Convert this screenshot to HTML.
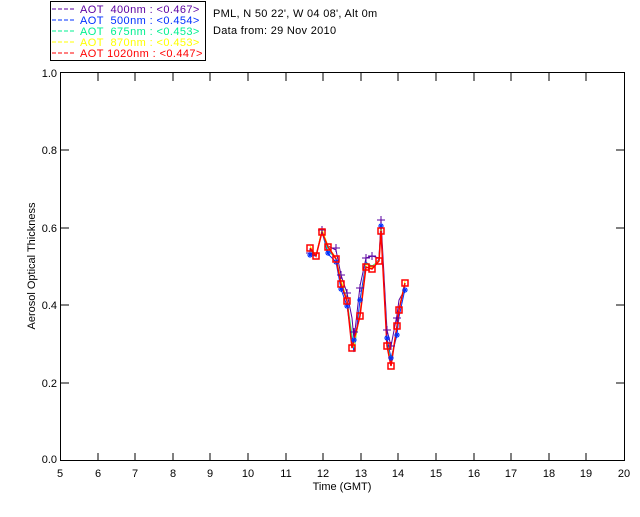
<!DOCTYPE html>
<html><head><style>
body{margin:0;background:#fff;}
svg text{font-family:"Liberation Sans",sans-serif;font-size:11px;}
</style></head><body>
<svg width="640" height="512" xmlns="http://www.w3.org/2000/svg">
<defs>
<path id="pl" d="M-4,0H4M0,-4V4" stroke="#5a00a0" fill="none"/>
<path id="st" d="M-3,0H3M0,-3V3M-2,-2L2,2M-2,2L2,-2" stroke="#0030ff" fill="none"/>
</defs>
<rect x="50.5" y="1.5" width="155" height="59" fill="none" stroke="#000"/>
<g font-size="11" letter-spacing="0.4">
<line x1="52" y1="9" x2="74" y2="9" stroke="#5a00a0" stroke-dasharray="4,2"/><text x="80" y="13" fill="#5a00a0">AOT &#160;400nm : &lt;0.467&gt;</text>
<line x1="52" y1="20" x2="74" y2="20" stroke="#0030ff" stroke-dasharray="4,2"/><text x="80" y="24" fill="#0030ff">AOT &#160;500nm : &lt;0.454&gt;</text>
<line x1="52" y1="31" x2="74" y2="31" stroke="#00f090" stroke-dasharray="4,2"/><text x="80" y="35" fill="#00f090">AOT &#160;675nm : &lt;0.453&gt;</text>
<line x1="52" y1="42" x2="74" y2="42" stroke="#ffff00" stroke-dasharray="4,2"/><text x="80" y="46" fill="#ffff00">AOT &#160;870nm : &lt;0.453&gt;</text>
<line x1="52" y1="53" x2="74" y2="53" stroke="#ff0000" stroke-dasharray="4,2"/><text x="80" y="57" fill="#ff0000">AOT 1020nm : &lt;0.447&gt;</text>
</g>
<text x="213" y="17" letter-spacing="0.3">PML, N 50 22', W 04 08', Alt 0m</text>
<text x="213" y="34" letter-spacing="0.3">Data from: 29 Nov 2010</text>
<rect x="60.5" y="72.5" width="564" height="388" fill="none" stroke="#000"/>
<g stroke="#000">
<line x1="98" y1="461" x2="98" y2="453"/><line x1="135" y1="461" x2="135" y2="453"/><line x1="173" y1="461" x2="173" y2="453"/><line x1="210" y1="461" x2="210" y2="453"/><line x1="248" y1="461" x2="248" y2="453"/><line x1="286" y1="461" x2="286" y2="453"/><line x1="323" y1="461" x2="323" y2="453"/><line x1="361" y1="461" x2="361" y2="453"/><line x1="398" y1="461" x2="398" y2="453"/><line x1="436" y1="461" x2="436" y2="453"/><line x1="474" y1="461" x2="474" y2="453"/><line x1="511" y1="461" x2="511" y2="453"/><line x1="549" y1="461" x2="549" y2="453"/><line x1="586" y1="461" x2="586" y2="453"/>
<line x1="98" y1="73" x2="98" y2="81"/><line x1="135" y1="73" x2="135" y2="81"/><line x1="173" y1="73" x2="173" y2="81"/><line x1="210" y1="73" x2="210" y2="81"/><line x1="248" y1="73" x2="248" y2="81"/><line x1="286" y1="73" x2="286" y2="81"/><line x1="323" y1="73" x2="323" y2="81"/><line x1="361" y1="73" x2="361" y2="81"/><line x1="398" y1="73" x2="398" y2="81"/><line x1="436" y1="73" x2="436" y2="81"/><line x1="474" y1="73" x2="474" y2="81"/><line x1="511" y1="73" x2="511" y2="81"/><line x1="549" y1="73" x2="549" y2="81"/><line x1="586" y1="73" x2="586" y2="81"/>
<line x1="61" y1="383" x2="69" y2="383"/><line x1="61" y1="305" x2="69" y2="305"/><line x1="61" y1="228" x2="69" y2="228"/><line x1="61" y1="150" x2="69" y2="150"/>
<line x1="624" y1="383" x2="616" y2="383"/><line x1="624" y1="305" x2="616" y2="305"/><line x1="624" y1="228" x2="616" y2="228"/><line x1="624" y1="150" x2="616" y2="150"/>
</g>
<g font-size="10" text-anchor="end">
<text x="57" y="463">0.0</text><text x="57" y="387">0.2</text><text x="57" y="309">0.4</text><text x="57" y="232">0.6</text><text x="57" y="154">0.8</text><text x="57" y="77">1.0</text>
</g>
<g font-size="10" text-anchor="middle">
<text x="60" y="477">5</text><text x="98" y="477">6</text><text x="135" y="477">7</text><text x="173" y="477">8</text><text x="210" y="477">9</text><text x="248" y="477">10</text><text x="286" y="477">11</text><text x="323" y="477">12</text><text x="361" y="477">13</text><text x="398" y="477">14</text><text x="436" y="477">15</text><text x="474" y="477">16</text><text x="511" y="477">17</text><text x="549" y="477">18</text><text x="586" y="477">19</text><text x="624" y="477">20</text>
<text x="342" y="490">Time (GMT)</text>
</g>
<text x="0" y="0" font-size="10" text-anchor="middle" transform="translate(35,266) rotate(-90)">Aerosol Optical Thickness</text>
<polyline fill="none" stroke="#5a00a0" points="310,253 316,256 322,230 328,246 336,250 341,275 347,293 352,318 354,340 360,286 366,258 372,256 379,258 381,220 387,330 391,346 397,315 399,300 405,289"/>
<polyline fill="none" stroke="#0030ff" points="310,255 316,256 322,232 328,254 336,262 341,289 347,306 352,340 354,352 360,300 366,262 372,268 379,259 381,230 387,338 391,358 397,335 399,317 405,289"/>
<polyline fill="none" stroke="#00f090" points="310,250 316,256 322,231 328,251 336,258 341,280 347,300 352,335 354,348 360,313 366,263 372,266 379,261 381,231 387,342 391,362 397,328 399,310 405,285"/>
<polyline fill="none" stroke="#ffff00" points="310,246 316,256 322,229 328,246 336,258 341,280 347,300 352,345 354,346 360,313 366,264 372,268 379,260 381,229 387,344 391,364 397,326 399,309 405,281"/>
<polyline fill="none" stroke="#ff0000" stroke-width="1.5" points="310,248 316,256 322,232 328,247 336,259 341,284 347,301 352,348 354,340 360,316 366,267 372,269 379,261 381,231 387,346 391,366 397,326 399,310 405,283"/>
<g>
<use href="#pl" x="310" y="253"/><use href="#pl" x="322" y="230"/><use href="#pl" x="336" y="248"/><use href="#pl" x="341" y="275"/><use href="#pl" x="347" y="293"/><use href="#pl" x="354" y="332"/><use href="#pl" x="360" y="288"/><use href="#pl" x="366" y="258"/><use href="#pl" x="372" y="256"/><use href="#pl" x="381" y="220"/><use href="#pl" x="387" y="330"/><use href="#pl" x="391" y="346"/><use href="#pl" x="397" y="318"/>
<use href="#st" x="310" y="255"/><use href="#st" x="328" y="253"/><use href="#st" x="336" y="262"/><use href="#st" x="341" y="289"/><use href="#st" x="347" y="306"/><use href="#st" x="354" y="340"/><use href="#st" x="360" y="300"/><use href="#st" x="381" y="226"/><use href="#st" x="387" y="338"/><use href="#st" x="391" y="358"/><use href="#st" x="397" y="335"/><use href="#st" x="405" y="290"/>
</g>
<g fill="none" stroke="#ff0000" stroke-width="1.5">
<rect x="307" y="245" width="6" height="6"/><rect x="313" y="253" width="6" height="6"/><rect x="319" y="229" width="6" height="6"/><rect x="325" y="244" width="6" height="6"/><rect x="333" y="256" width="6" height="6"/><rect x="338" y="281" width="6" height="6"/><rect x="344" y="298" width="6" height="6"/><rect x="349" y="345" width="6" height="6"/><rect x="357" y="313" width="6" height="6"/><rect x="363" y="264" width="6" height="6"/><rect x="369" y="266" width="6" height="6"/><rect x="376" y="258" width="6" height="6"/><rect x="378" y="228" width="6" height="6"/><rect x="384" y="343" width="6" height="6"/><rect x="388" y="363" width="6" height="6"/><rect x="394" y="323" width="6" height="6"/><rect x="396" y="307" width="6" height="6"/><rect x="402" y="280" width="6" height="6"/>
</g>
</svg>
</body></html>
